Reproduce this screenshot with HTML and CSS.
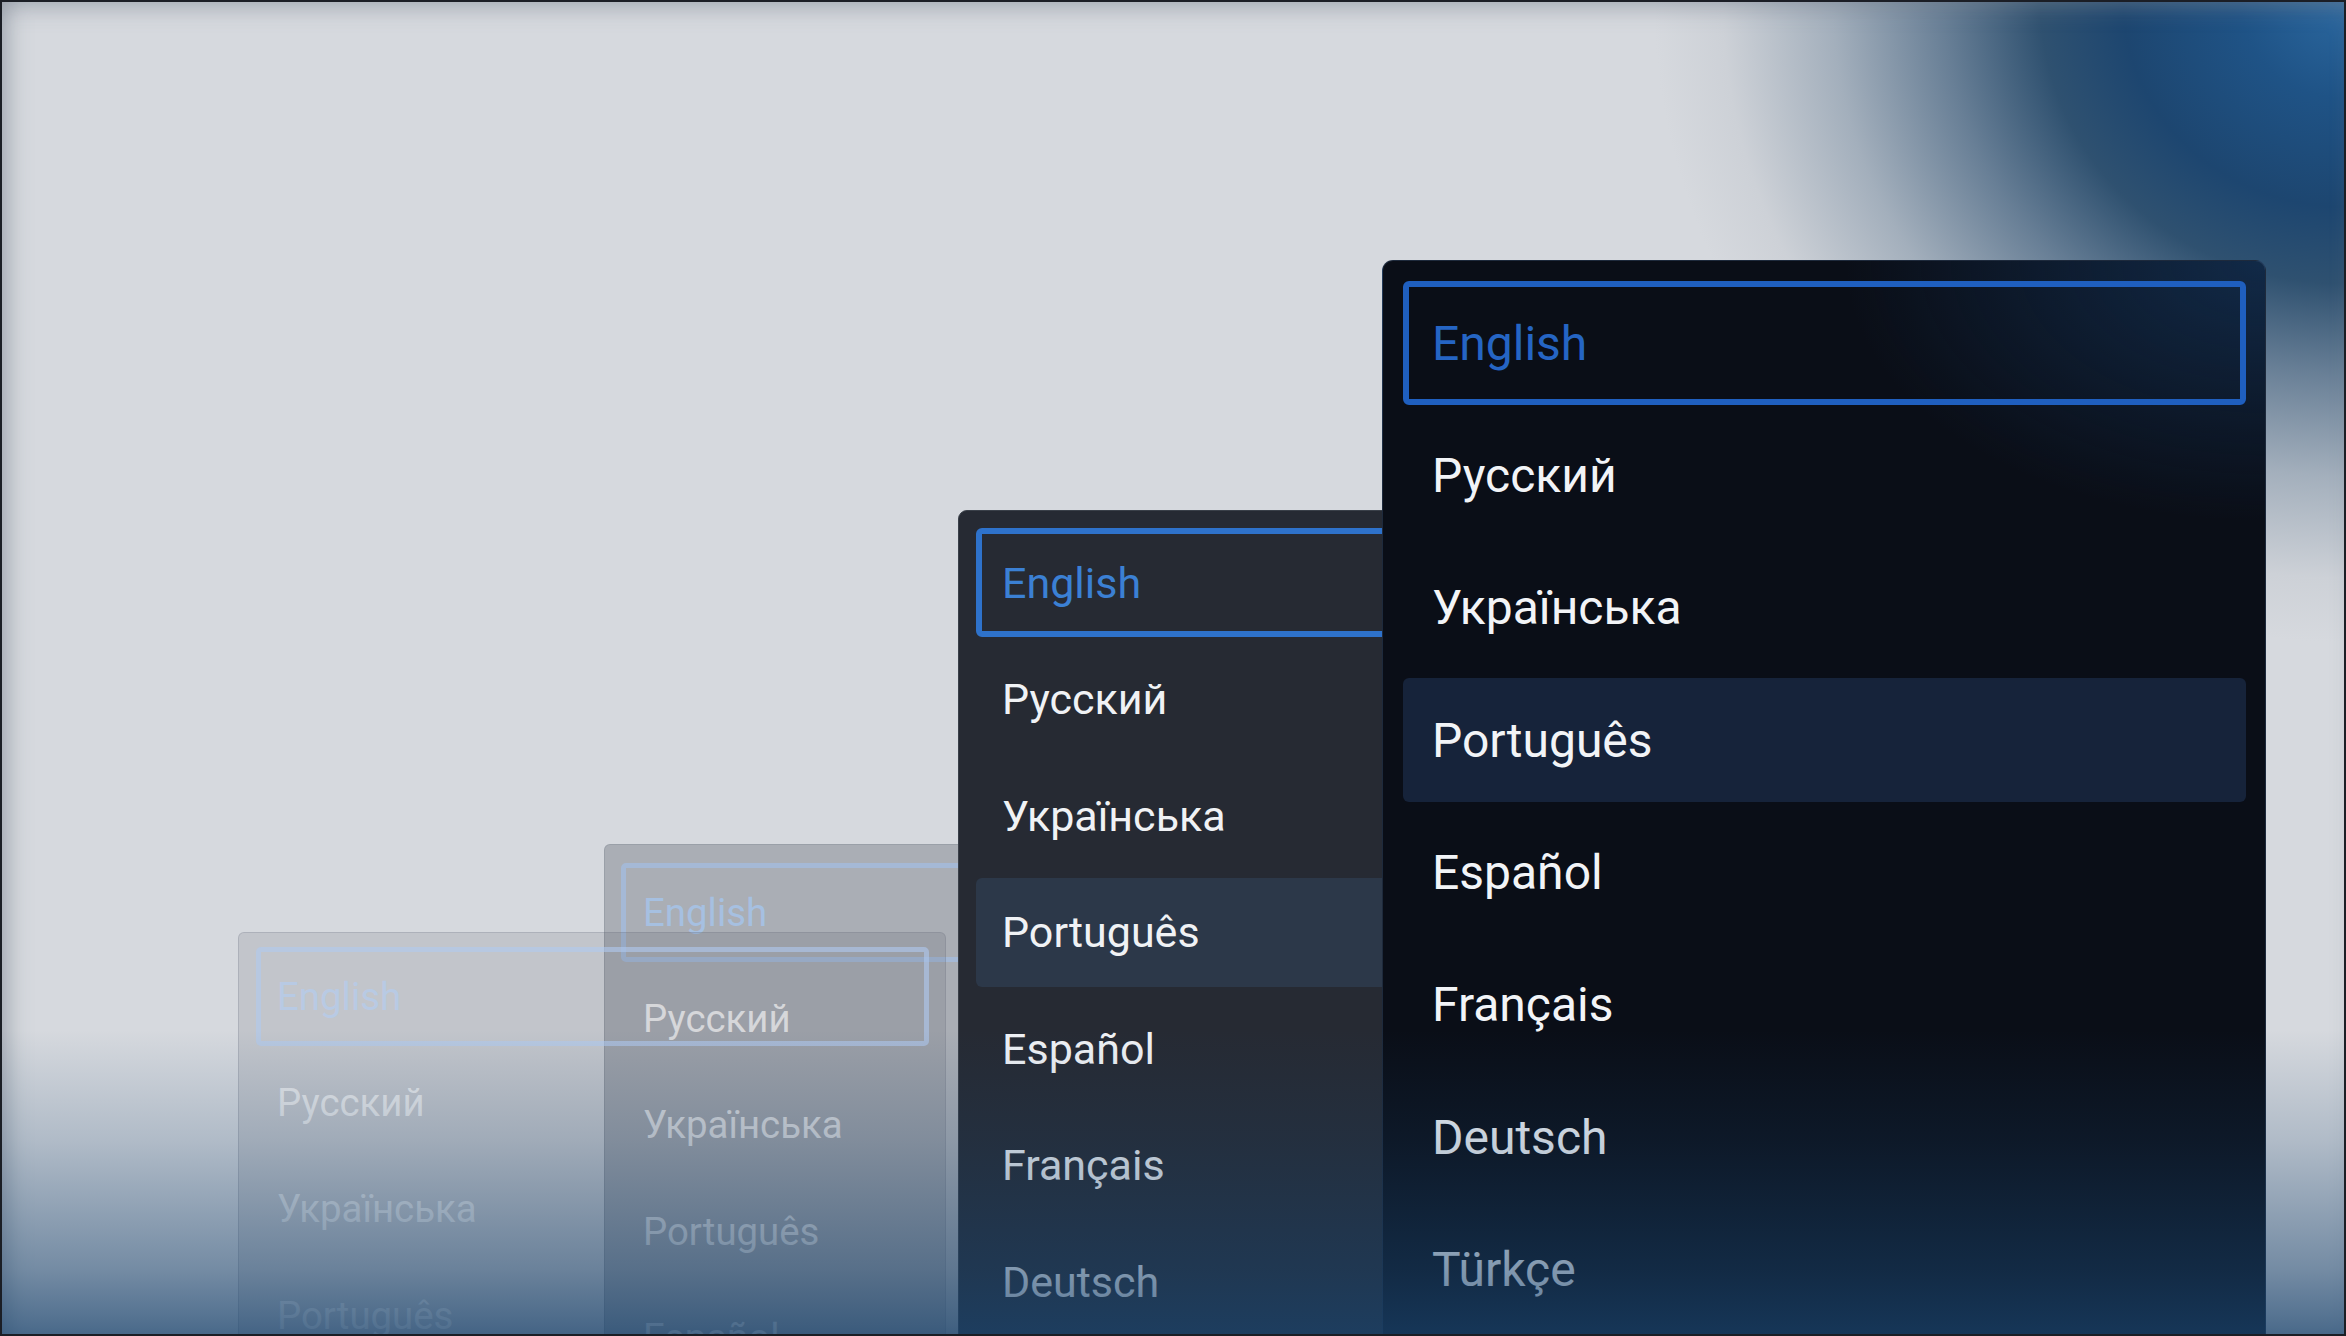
FILE: index.html
```html
<!DOCTYPE html>
<html lang="en">
<head>
<meta charset="utf-8">
<title>Language menus</title>
<link rel="stylesheet" href="styles.css">
</head>
<body>
<div class="stage">
  <div class="panel p2">
    <ul class="list">
      <li class="row active">English</li>
      <li class="row">Русский</li>
      <li class="row">Українська</li>
      <li class="row">Português</li>
      <li class="row">Español</li>
    </ul>
  </div>
  <div class="panel p1">
    <ul class="list">
      <li class="row active">English</li>
      <li class="row">Русский</li>
      <li class="row">Українська</li>
      <li class="row">Português</li>
    </ul>
  </div>
  <div class="panel p3">
    <ul class="list">
      <li class="row active">English</li>
      <li class="row">Русский</li>
      <li class="row">Українська</li>
      <li class="row hover">Português</li>
      <li class="row">Español</li>
      <li class="row">Français</li>
      <li class="row">Deutsch</li>
    </ul>
  </div>
  <div class="panel p4">
    <ul class="list">
      <li class="row active">English</li>
      <li class="row">Русский</li>
      <li class="row">Українська</li>
      <li class="row hover">Português</li>
      <li class="row">Español</li>
      <li class="row">Français</li>
      <li class="row">Deutsch</li>
      <li class="row">Türkçe</li>
    </ul>
  </div>
  <div class="fog"></div>
</div>
</body>
</html>
```

FILE: styles.css
```css
html, body {
  margin: 0;
  padding: 0;
  background: #1b1e25;
}

body {
  font-family: Roboto, "Noto Sans", "DejaVu Sans", sans-serif;
}

.stage {
  position: relative;
  box-sizing: border-box;
  width: 2346px;
  height: 1336px;
  overflow: hidden;
  border: 2px solid #1b1e25;
  background:
    radial-gradient(ellipse 690px 640px at 100% 0%,
      #2b68a0 0%,
      #1f5386 15%,
      #1d4670 32%,
      #2f5170 44%,
      #687f96 58%,
      #a3afbc 74%,
      #cdd1d7 90%,
      #d6d9de 100%),
    #d6d9de;
  box-shadow:
    inset 16px 0 22px -10px rgba(120, 128, 142, 0.5),
    inset 0 16px 22px -10px rgba(120, 128, 142, 0.45);
}

.panel {
  position: absolute;
  box-sizing: border-box;
}

.list {
  list-style: none;
  margin: 0;
  padding: 0;
  display: flex;
  flex-direction: column;
}

.row {
  box-sizing: border-box;
  display: flex;
  align-items: center;
  border-style: solid;
  border-color: transparent;
  white-space: nowrap;
}

/* front panel */
.p4 {
  left: 1380px;
  top: 258px;
  width: 884px;
  height: 1200px;
  padding: 20px 19px 0 20px;
  border: 1px solid rgba(70, 95, 130, 0.35);
  border-radius: 11px 11px 0 0;
  background:
    radial-gradient(ellipse 420px 260px at 100% 0%, rgba(22, 60, 104, 0.6), rgba(22, 60, 104, 0) 100%),
    #0a0e17;
}

.p4 .list {
  gap: 8.4px;
}

.p4 .row {
  height: 124px;
  border-width: 6px;
  border-radius: 6px;
  padding-left: 23px;
  font-size: 48px;
  color: #f2f4f7;
}

.p4 .row.active {
  border-color: #1f5fbf;
  color: #2565c4;
}

.p4 .row.hover {
  background: #16233a;
}

/* middle dark panel */
.p3 {
  left: 956px;
  top: 508px;
  width: 560px;
  height: 1000px;
  padding: 17px 0 0 17px;
  border: 1px solid #3a4049;
  border-radius: 9px 9px 0 0;
  background: #262a33;
}

.p3 .list {
  gap: 7.5px;
}

.p3 .row {
  width: 520px;
  height: 109px;
  border-width: 6px;
  border-radius: 6px;
  padding-left: 20px;
  font-size: 43px;
  color: #f0f2f5;
}

.p3 .row.active {
  border-color: #2e72cb;
  color: #3b80d4;
}

.p3 .row.hover {
  background: #2c3849;
}

/* translucent back panels */
.p2,
.p1 {
  width: 708px;
  height: 800px;
  border: 1px solid rgba(100, 110, 125, 0.22);
  border-radius: 6px 6px 0 0;
}

.p2 {
  left: 602px;
  top: 842px;
  padding: 18px 0 0 16px;
  background: rgba(40, 48, 60, 0.25);
}

.p1 {
  left: 236px;
  top: 930px;
  padding: 14px 0 0 17px;
  background: rgba(40, 48, 60, 0.115);
}

.p2 .list,
.p1 .list {
  gap: 7.2px;
}

.p2 .row,
.p1 .row {
  width: 673px;
  height: 99px;
  border-width: 5px;
  border-radius: 5px;
  padding-left: 17px;
  font-size: 38.4px;
}

.p2 .row {
  color: rgba(255, 255, 255, 0.78);
}

.p2 .row.active {
  border-color: rgba(160, 195, 240, 0.55);
  color: rgba(165, 198, 240, 0.75);
}

.p1 .row {
  color: rgba(255, 255, 255, 0.6);
  padding-left: 16px;
}

.p1 .row.active {
  border-color: rgba(175, 202, 240, 0.6);
  color: rgba(180, 206, 242, 0.66);
}

.fog {
  position: absolute;
  inset: 0;
  pointer-events: none;
  background: linear-gradient(to bottom,
    rgba(26, 68, 110, 0) 1028px,
    rgba(26, 68, 110, 0.2) 1138px,
    rgba(26, 68, 110, 0.52) 1268px,
    rgba(26, 68, 110, 0.75) 1334px);
}
```
